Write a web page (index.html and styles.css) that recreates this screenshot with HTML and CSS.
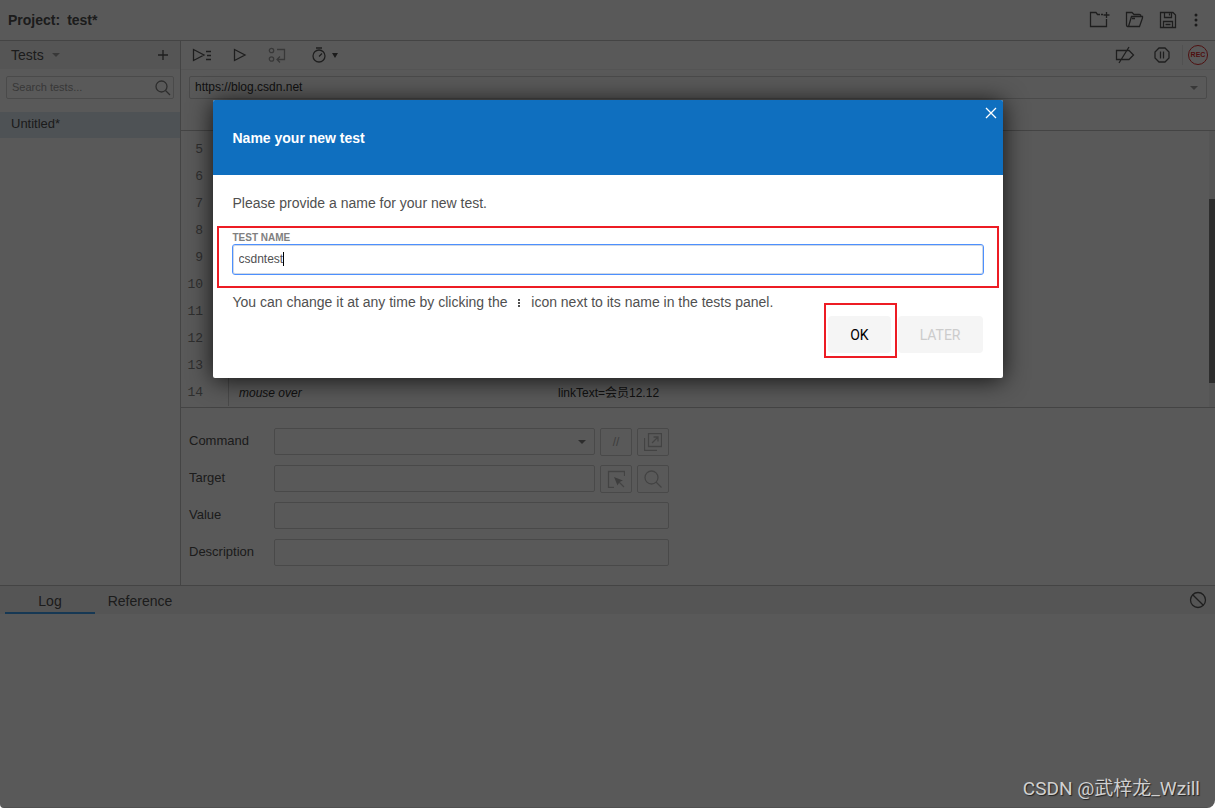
FILE: index.html
```html
<!DOCTYPE html>
<html lang="en">
<head>
<meta charset="utf-8">
<title>Project: test*</title>
<link rel="stylesheet" href="styles.css">
</head>
<body>
<div class="app">
  <header class="project">
    <h1 class="project-title"><span>Project:</span><span>test*</span></h1>
    <div class="project-actions">
      <button class="icon-btn" aria-label="New project"><svg width="22" height="18" viewBox="0 0 22 18"><path d="M11 3.500H8.500L7 1.500H1.500V15.500H17.500V8M12 3.500H14M17.500 1V7M14.500 4H20.500"/></svg></button>
      <button class="icon-btn" aria-label="Open project"><svg width="20" height="18" viewBox="0 0 20 18"><path d="M3.500 15.500C2 15.500 1.500 15 1.500 14V1.500H7L9 3.500H14.500C15.500 3.500 16 4.500 16 5.500M3.500 15.500L6.500 5.500H17.500V7L14.500 15.500ZM7 7.500H10"/></svg></button>
      <button class="icon-btn" aria-label="Save project"><svg width="18" height="18" viewBox="0 0 18 18"><path d="M1.500 1.500H14L16.500 4V16.500H1.500ZM5.500 1.500V6.500H12.500V1.500M10.500 2.500V4.500M4.500 16.500V10.500H13.500V16.500M6.500 13.500H11.500"/></svg></button>
      <button class="icon-btn more" aria-label="More options"><svg class="solid" width="4" height="14" viewBox="0 0 4 14"><circle cx="2" cy="2" r="1.500"/><circle cx="2" cy="7" r="1.500"/><circle cx="2" cy="12" r="1.500"/></svg></button>
    </div>
  </header>

  <div class="workspace">
    <aside class="sidebar">
      <div class="sidebar-head">
        <button class="tests-menu">Tests <svg class="solid pale" width="8" height="4" viewBox="0 0 8 4"><path d="M0 0H8L4 4Z"/></svg></button>
        <button class="icon-btn" aria-label="Add new test"><svg width="12" height="12" viewBox="0 0 12 12"><path d="M6 1V11M1 6H11"/></svg></button>
      </div>
      <div class="search">
        <input type="search" aria-label="Search tests" placeholder="Search tests...">
        <svg class="mid" width="16" height="16" viewBox="0 0 16 16"><circle cx="6.500" cy="6.500" r="5.500"/><path d="M10.500 10.500L15 15"/></svg>
      </div>
      <a class="test-item" href="#">Untitled*</a>
    </aside>

    <main class="editor">
      <div class="toolbar">
        <div class="tools">
          <button class="icon-btn" aria-label="Run all tests"><svg width="20" height="14" viewBox="0 0 20 14"><path d="M1.500 1.500V12.500L12 7ZM14 3.500H19M15 7.500H19M14 11.500H19"/></svg></button>
          <button class="icon-btn" aria-label="Run current test"><svg width="14" height="14" viewBox="0 0 14 14"><path d="M1.500 1.500V12.500L12 7Z"/></svg></button>
          <button class="icon-btn" aria-label="Step over"><svg class="pale" width="18" height="16" viewBox="0 0 18 16"><circle cx="3.500" cy="3.500" r="2.200"/><circle cx="3.500" cy="12" r="2.200"/><path d="M9 2.500H16.500V12.500H9M12 9.500L9 12.500L12 15.500"/></svg></button>
          <button class="icon-btn speed" aria-label="Test speed"><svg width="14" height="16" viewBox="0 0 14 16"><circle cx="7" cy="9" r="6"/><path d="M4 1H10M7 9.500L10 6.500"/></svg><svg class="solid" width="6" height="5" viewBox="0 0 6 5"><path d="M0 0H6L3 5Z"/></svg></button>
        </div>
        <div class="tools-right">
          <button class="icon-btn" aria-label="Disable breakpoints"><svg width="20" height="18" viewBox="0 0 20 18"><path d="M1.500 4.500H14L18.500 9L14 13.500H1.500ZM4 17L14 1"/></svg></button>
          <button class="icon-btn" aria-label="Pause"><svg width="16" height="16" viewBox="0 0 16 16"><path d="M5 1H11L15 5V11L11 15H5L1 11V5ZM6.500 4.500V11.500M9.500 4.500V11.500"/></svg></button>
          <span class="record-slot"><button class="record">REC</button></span>
        </div>
      </div>
      <div class="url-row">
        <input type="text" aria-label="Playback base URL" value="https://blog.csdn.net">
        <svg class="solid pale" width="8" height="4" viewBox="0 0 8 4"><path d="M0 0H8L4 4Z"/></svg>
      </div>
      <div class="steps">
        <table class="commands">
          <tbody>
            <tr><th scope="row">5</th><td></td><td></td></tr>
            <tr><th scope="row">6</th><td></td><td></td></tr>
            <tr><th scope="row">7</th><td></td><td></td></tr>
            <tr><th scope="row">8</th><td></td><td></td></tr>
            <tr><th scope="row">9</th><td></td><td></td></tr>
            <tr><th scope="row">10</th><td></td><td></td></tr>
            <tr><th scope="row">11</th><td></td><td></td></tr>
            <tr><th scope="row">12</th><td></td><td></td></tr>
            <tr><th scope="row">13</th><td></td><td></td></tr>
            <tr><th scope="row">14</th><td><em>mouse over</em></td><td>linkText=会员12.12</td></tr>
          </tbody>
        </table>
        <div class="scrollbar"><div class="thumb"></div></div>
      </div>
      <form class="command-form">
        <div class="form-row">
          <label for="command">Command</label>
          <span class="combo"><input id="command" type="text"><svg class="solid mid" width="8" height="4" viewBox="0 0 8 4"><path d="M0 0H8L4 4Z"/></svg></span>
          <button type="button" class="square" aria-label="Toggle comment">//</button>
          <button type="button" class="square" aria-label="Open in new window"><svg width="18" height="18" viewBox="0 0 18 18"><path d="M4.500 .500H17.500V13.500H4.500ZM.500 5V17.500H13M8 10L14 4M9.500 4H14V8.500"/></svg></button>
        </div>
        <div class="form-row">
          <label for="target">Target</label>
          <input id="target" type="text">
          <button type="button" class="square" aria-label="Select target in page"><svg width="18" height="18" viewBox="0 0 18 18"><path d="M17.500 6V1.500H1.500V17.500H7M11 11L17 17"/><path class="fill" d="M7 7L16 10.500L12.500 12L10.500 15.500Z"/></svg></button>
          <button type="button" class="square" aria-label="Find target in page"><svg width="18" height="18" viewBox="0 0 18 18"><circle cx="7.500" cy="7.500" r="6.500"/><path d="M12 12L17.500 17.500"/></svg></button>
        </div>
        <div class="form-row">
          <label for="value">Value</label>
          <input id="value" type="text">
        </div>
        <div class="form-row">
          <label for="description">Description</label>
          <input id="description" type="text">
        </div>
      </form>
    </main>
  </div>

  <section class="console">
    <div class="tabs">
      <button class="tab active">Log</button>
      <button class="tab">Reference</button>
      <button class="icon-btn clear" aria-label="Clear log"><svg width="18" height="18" viewBox="0 0 18 18"><circle cx="9" cy="9" r="7.500"/><path d="M3.700 3.700L14.300 14.300"/></svg></button>
    </div>
  </section>

  <div class="backdrop">
    <dialog open class="modal" aria-labelledby="modal-title">
      <div class="modal-head">
        <h2 id="modal-title">Name your new test</h2>
        <button class="close" aria-label="Close"><svg width="12" height="12" viewBox="0 0 12 12"><path d="M1 1L11 11M11 1L1 11"/></svg></button>
      </div>
      <div class="modal-body">
        <p>Please provide a name for your new test.</p>
        <div class="field marked">
          <label for="test-name">TEST NAME</label>
          <input id="test-name" type="text" value="csdntest">
          <span class="caret"></span>
        </div>
        <p>You can change it at any time by clicking the <svg class="dots" width="16" height="10" viewBox="0 0 16 10"><path d="M7 1h2v2H7ZM7 4h2v2H7ZM7 7h2v2H7Z"/></svg> icon next to its name in the tests panel.</p>
        <div class="modal-actions">
          <span class="confirm marked"><button>OK</button></span>
          <button disabled>LATER</button>
        </div>
      </div>
    </dialog>
  </div>
  <div class="watermark">CSDN @武梓龙_Wzill</div>
</div>
</body>
</html>
```
FILE: styles.css
```css
* { box-sizing: border-box; }

body {
  margin: 0;
  background: #fff;
  color: #505050;
  font: 14px/18px "Liberation Sans", "Noto Sans CJK SC", sans-serif;
}

button, input {
  margin: 0;
  padding: 0;
  border: 0;
  background: none;
  color: inherit;
  font: inherit;
}

h1, h2, p { margin: 0; font-size: 14px; }

svg { display: block; fill: none; stroke: #585858; stroke-width: 1.3; }
svg.mid { stroke: #808080; }
svg.pale { stroke: #a0a0a0; }
svg.solid { fill: #505050; stroke: none; }
svg.solid.mid { fill: #808080; }
svg.solid.pale { fill: #a0a0a0; }

.icon-btn { display: flex; align-items: center; }

.app {
  position: relative;
  display: flex;
  flex-direction: column;
  min-height: 100vh;
  overflow: hidden;
  border-radius: 0 0 8px 4px;
}

.project {
  display: flex;
  align-items: center;
  justify-content: space-between;
  height: 41px;
  padding: 0 17px 0 8px;
  border-bottom: 1px solid #c4c4c4;
  background: #fff;
}
.project-title { display: flex; gap: 7px; }
.project-actions { display: flex; align-items: center; gap: 14px; }
.more { margin-left: 3px; }

.workspace { display: flex; border-bottom: 1px solid #c4c4c4; }

.sidebar { flex: none; width: 181px; border-right: 1px solid #c4c4c4; }
.sidebar-head {
  display: flex;
  align-items: center;
  justify-content: space-between;
  height: 28px;
  padding: 0 11px;
  background: #f4f4f4;
}
.tests-menu { display: flex; align-items: center; gap: 8px; }

.search { position: relative; margin: 7px 6px 13px; }
.search input {
  display: block;
  width: 100%;
  height: 23px;
  padding: 0 24px 2px 5px;
  border: 1px solid #d4d4d4;
  border-radius: 2px;
  font-size: 11px;
}
.search input::placeholder { color: #a0a0a0; }
.search svg { position: absolute; top: 4px; right: 3px; }

.test-item {
  display: block;
  padding: 3px 11px 5px;
  background: #dfebf3;
  color: inherit;
  text-decoration: none;
  font-size: 13px;
}

.editor { flex: 1; min-width: 0; }
.toolbar {
  display: flex;
  justify-content: space-between;
  height: 29px;
  padding: 0 7px 0 11px;
  border-bottom: 1px solid #f0f0f0;
}
.tools, .tools-right { display: flex; align-items: center; }
.tools { gap: 21px; }
.tools-right { gap: 19px; }
.speed { gap: 6px; margin-left: 5px; }
.record-slot { padding-left: 5px; margin-left: -7px; border-left: 1px solid #e8e8e8; }
.record {
  display: block;
  width: 20px;
  height: 20px;
  border: 1px solid #e03030;
  border-radius: 50%;
  color: #e03030;
  font-size: 7px;
  font-weight: bold;
  line-height: 18px;
}

.url-row { position: relative; padding: 6px 8px 31px; }
.url-row input {
  display: block;
  width: 100%;
  height: 23px;
  padding: 0 24px 2px 5px;
  border: 1px solid #d4d4d4;
  border-radius: 2px;
  color: #333;
  font-size: 12px;
}
.url-row svg { position: absolute; top: 16px; right: 17px; }

.steps {
  display: flex;
  border-top: 1px solid #c4c4c4;
  border-bottom: 1px solid #c4c4c4;
}
.commands { flex: 1; padding: 5px 0 1px; border-spacing: 0; table-layout: fixed; }
.commands th, .commands td { height: 27px; padding: 0; }
.commands th {
  width: 48px;
  padding-right: 25px;
  border-right: 1px solid #d0d0d0;
  color: #888;
  font: 13px/18px "Liberation Mono", monospace;
  text-align: right;
}
.commands td { padding-left: 10px; color: #333; font-size: 12px; }
.commands td:nth-child(2) { width: 319px; }
.scrollbar { width: 6px; padding-top: 68px; background: #f4f4f4; }
.thumb { height: 184px; background: #808080; }

.command-form { display: grid; gap: 9px; padding: 20px 8px 18px; }
.form-row { display: flex; gap: 5px; width: 480px; max-width: 100%; height: 28px; }
.form-row label { flex: none; width: 80px; padding-top: 4px; font-size: 13px; }
.form-row input {
  flex: 1;
  min-width: 0;
  width: 100%;
  height: 27px;
  padding: 0 6px;
  border: 1px solid #d0d0d0;
  border-radius: 2px;
}
.combo { position: relative; flex: 1; display: flex; }
.combo svg { position: absolute; top: 12px; right: 9px; }
.square {
  display: flex;
  align-items: center;
  justify-content: center;
  width: 32px;
  height: 28px;
  border: 1px solid #d0d0d0;
  border-radius: 2px;
  color: #b0b0b0;
  font-size: 12px;
}
.square svg { stroke: #c0c0c0; }
.square .fill { fill: #b0b0b0; stroke: none; }

.console { flex: 1; border-bottom: 1px solid #e4e4e4; }
.tabs { display: flex; height: 28px; padding: 0 8px 0 5px; background: #f4f4f4; }
.tab { width: 90px; padding-top: 4px; border-bottom: 2px solid transparent; }
.tab.active { border-color: #40a0f0; }
.clear { margin-left: auto; }

.backdrop {
  position: absolute;
  inset: 0;
  display: flex;
  align-items: flex-start;
  justify-content: center;
  padding: 100px 16px 0;
  background: rgba(0, 0, 0, .65);
}
.modal {
  position: static;
  flex: 0 1 790px;
  margin: 0;
  padding: 0;
  border: 0;
  border-radius: 2px;
  background: #fff;
  color: #505050;
  box-shadow: 0 2px 24px rgba(0, 0, 0, .8);
}
.modal-head {
  position: relative;
  display: flex;
  align-items: center;
  height: 75px;
  padding: 0 20px;
  border-radius: 2px 2px 0 0;
  background: #0f6fbf;
  color: #fff;
}
.close { position: absolute; right: 6px; top: 7px; }
.close svg { stroke: #fff; }
.modal-body { padding: 19px 20px 25px; }

.marked { position: relative; }
.marked::after {
  content: "";
  position: absolute;
  border: 2px solid #ed1c24;
  pointer-events: none;
}
.field { margin: 20px 0 19px; }
.field::after { inset: -6px -16px -14px; }
.field label {
  display: block;
  padding-bottom: 1px;
  color: #808080;
  font-size: 10px;
  font-weight: bold;
  line-height: 12px;
}
.field input {
  display: block;
  width: 100%;
  height: 29px;
  border: 1px solid #d0d8e4;
  border-radius: 2px;
  padding: 0 5px 2px;
  outline: 1px solid #4d90fe;
  font-size: 12px;
}
.caret {
  position: absolute;
  left: 50px;
  bottom: 8px;
  width: 1px;
  height: 14px;
  background: #000;
}
.dots { display: inline-block; vertical-align: -1px; fill: #505050; stroke: none; }

.modal-actions { display: flex; justify-content: flex-end; gap: 7px; margin-top: 5px; }
.modal-actions button {
  height: 37px;
  padding: 0 22px;
  border-radius: 4px;
  background: #f5f5f5;
  color: #000;
  font-family: Roboto, sans-serif;
}
.modal-actions button:disabled { color: #ccc; }
.confirm::after { inset: -13px -6px -5px -4px; }

.watermark {
  position: absolute;
  right: 15px;
  bottom: 7px;
  color: #d0d0d0;
  font: 19px/24px Roboto, "Noto Sans CJK SC", sans-serif;
  text-shadow: 1px 1px 1px #222;
}
```
